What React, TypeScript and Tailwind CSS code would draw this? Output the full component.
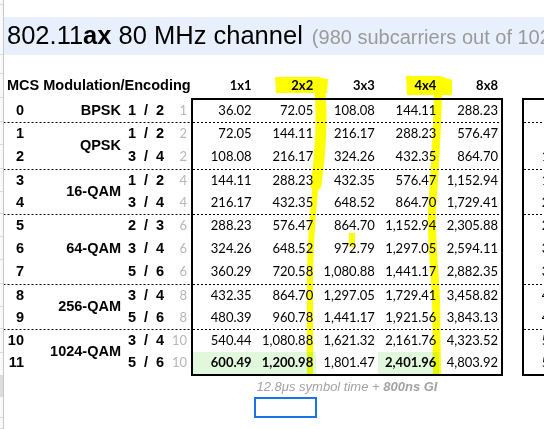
import React from "react";

type Row = {
  mcs: number;
  code: [string, string];
  ss: number;
  vals: string[];
  alt: string;
};

const ROWS: Row[] = [
  { mcs: 0, code: ["1", "2"], ss: 1, vals: ["36.02", "72.05", "108.08", "144.11", "288.23"], alt: "34.03" },
  { mcs: 1, code: ["1", "2"], ss: 2, vals: ["72.05", "144.11", "216.17", "288.23", "576.47"], alt: "68.06" },
  { mcs: 2, code: ["3", "4"], ss: 2, vals: ["108.08", "216.17", "324.26", "432.35", "864.70"], alt: "102.09" },
  { mcs: 3, code: ["1", "2"], ss: 4, vals: ["144.11", "288.23", "432.35", "576.47", "1,152.94"], alt: "136.12" },
  { mcs: 4, code: ["3", "4"], ss: 4, vals: ["216.17", "432.35", "648.52", "864.70", "1,729.41"], alt: "204.18" },
  { mcs: 5, code: ["2", "3"], ss: 6, vals: ["288.23", "576.47", "864.70", "1,152.94", "2,305.88"], alt: "272.24" },
  { mcs: 6, code: ["3", "4"], ss: 6, vals: ["324.26", "648.52", "972.79", "1,297.05", "2,594.11"], alt: "306.27" },
  { mcs: 7, code: ["5", "6"], ss: 6, vals: ["360.29", "720.58", "1,080.88", "1,441.17", "2,882.35"], alt: "340.29" },
  { mcs: 8, code: ["3", "4"], ss: 8, vals: ["432.35", "864.70", "1,297.05", "1,729.41", "3,458.82"], alt: "408.35" },
  { mcs: 9, code: ["5", "6"], ss: 8, vals: ["480.39", "960.78", "1,441.17", "1,921.56", "3,843.13"], alt: "453.71" },
  { mcs: 10, code: ["3", "4"], ss: 10, vals: ["540.44", "1,080.88", "1,621.32", "2,161.76", "4,323.52"], alt: "510.44" },
  { mcs: 11, code: ["5", "6"], ss: 10, vals: ["600.49", "1,200.98", "1,801.47", "2,401.96", "4,803.92"], alt: "567.16" },
];

const GROUPS: { mod: string; rows: number[] }[] = [
  { mod: "BPSK", rows: [0] },
  { mod: "QPSK", rows: [1, 2] },
  { mod: "16-QAM", rows: [3, 4] },
  { mod: "64-QAM", rows: [5, 6, 7] },
  { mod: "256-QAM", rows: [8, 9] },
  { mod: "1024-QAM", rows: [10, 11] },
];

const H = [22, 23, 24, 23, 22, 23, 23, 24, 23, 22, 23, 22];
const HC: Record<number, string> = {
  5: "h-[5px]",
  11: "h-[11px]",
  19: "h-[19px]",
  20: "h-[20px]",
  21: "h-[21px]",
  22: "h-[22px]",
  23: "h-[23px]",
  24: "h-[24px]",
  50: "h-[50px]",
};

const STRIP = [5, 50, 19, 24, 24, 23, 24, 23, 22, 23, 23, 24, 23, 22, 24, 23, 21, 21, 11];

const DASH =
  "bg-[linear-gradient(to_right,#000_2px,transparent_2px)] bg-[length:4px_1px] bg-repeat-x bg-top";

const GREEN = new Set(["11-0", "11-1", "11-3"]);

const ARIAL = "font-['Liberation_Sans',Arial,sans-serif]";
const CAL = "font-['Lato','Liberation_Sans',sans-serif]";

function LeftGroup({ g, first }: { g: { mod: string; rows: number[] }; first: boolean }) {
  return (
    <div className={`flex ${first ? "" : DASH}`}>
      <div className="w-[23px] flex flex-col">
        {g.rows.map((i) => (
          <div key={i} className={`${HC[H[i]]} flex items-center justify-end pr-[3px]`}>
            {ROWS[i].mcs}
          </div>
        ))}
      </div>
      <div className="w-[97px] flex items-center justify-end pr-[3px]">{g.mod}</div>
      <div className="w-[46px] flex flex-col">
        {g.rows.map((i) => (
          <div key={i} className={`${HC[H[i]]} flex items-center`}>
            <span className="w-[16px] text-center">{ROWS[i].code[0]}</span>
            <span className="w-[12px] text-center">/</span>
            <span className="w-[16px] text-center">{ROWS[i].code[1]}</span>
          </div>
        ))}
      </div>
      <div className={`w-[21px] flex flex-col ${CAL} font-normal text-[13px] text-[#b7b7b7]`}>
        {g.rows.map((i) => (
          <div key={i} className={`${HC[H[i]]} flex items-center justify-end pr-[4px]`}>
            {ROWS[i].ss}
          </div>
        ))}
      </div>
    </div>
  );
}

function BoxGroup({ g, first, alt }: { g: { mod: string; rows: number[] }; first: boolean; alt?: boolean }) {
  return (
    <div className={first ? "" : DASH}>
      {g.rows.map((i) => (
        <div key={i} className={`grid grid-cols-5 ${HC[H[i]]}`}>
          {alt ? (
            <>
              <div className="flex items-center justify-end pr-[3px]">{ROWS[i].alt}</div>
              <div />
              <div />
              <div />
              <div />
            </>
          ) : (
            ROWS[i].vals.map((v, c) => (
              <div
                key={c}
                className={`flex items-center justify-end pr-[3px] ${
                  GREEN.has(`${i}-${c}`) ? "bg-[#e2f8dd] font-bold" : ""
                }`}
              >
                {v}
              </div>
            ))
          )}
        </div>
      ))}
    </div>
  );
}

export default function App() {
  return (
    <div className="relative w-[544px] h-[429px] overflow-hidden bg-white flex text-black">
      {/* row header strip */}
      <div className="w-[4px] shrink-0 border-r border-[#c8c8c8] bg-[#f8f9fa] flex flex-col">
        {STRIP.map((h, k) => (
          <div
            key={k}
            className={`${HC[h]} border-b border-[#dadada] ${k === 16 ? "bg-[#dcdcdc]" : ""}`}
          />
        ))}
      </div>

      <div className="flex-1 min-w-0 flex flex-col whitespace-nowrap">
        {/* title band */}
        <div className={`mt-[17px] h-[38px] bg-[#e8f0fe] flex items-center pl-[3px] overflow-hidden ${ARIAL}`}>
          <span className="flex items-baseline leading-none">
            <span className="text-[25.5px]">
              802.11<b>ax</b> 80 MHz channel
            </span>
            <span className="ml-[9px] text-[20px] text-[#9a9a9a]">(980 subcarriers out of 1024)</span>
          </span>
        </div>

        {/* header row */}
        <div className="mt-[19px] h-[24px] flex items-center">
          <div className={`w-[189px] shrink-0 pl-[3px] text-[14.5px] font-bold ${ARIAL}`}>
            MCS Modulation/Encoding
          </div>
          <div className={`w-[308px] shrink-0 grid grid-cols-5 text-[13px] font-bold ${CAL}`}>
            {["1x1", "2x2", "3x3", "4x4", "8x8"].map((t) => (
              <div key={t} className="text-right pr-[3px]">
                {t}
              </div>
            ))}
          </div>
        </div>

        {/* table */}
        <div className="flex">
          <div className={`w-[187px] shrink-0 py-[2px] text-[14.5px] font-bold ${ARIAL}`}>
            {GROUPS.map((g, k) => (
              <LeftGroup key={k} g={g} first={k === 0} />
            ))}
          </div>
          <div className={`w-[312px] shrink-0 border-2 border-black text-[13px] ${CAL}`}>
            {GROUPS.map((g, k) => (
              <BoxGroup key={k} g={g} first={k === 0} />
            ))}
          </div>
          <div className="w-[19px] shrink-0" />
          <div className={`w-[312px] shrink-0 border-2 border-black text-[13px] ${CAL}`}>
            {GROUPS.map((g, k) => (
              <BoxGroup key={k} g={g} first={k === 0} alt />
            ))}
          </div>
        </div>

        {/* footer note */}
        <div className="h-[21px] flex items-center">
          <div className={`ml-[187px] w-[312px] text-center italic text-[13px] text-[#a3a3a3] ${ARIAL}`}>
            12.8μs symbol time + <b>800ns GI</b>
          </div>
        </div>

        {/* selected cell */}
        <div className="h-[21px] flex">
          <div className="ml-[250px] w-[63px] h-[21px] border-2 border-[#1a73e8]" />
        </div>
      </div>

      {/* highlighter strokes */}
      <svg
        className="absolute left-0 top-0 w-[544px] h-[429px] pointer-events-none mix-blend-multiply"
        viewBox="0 0 544 429"
      >
        <polygon points="275,77 318,77 328,79 327,93 276,93" fill="#ffff00" />
        <path
          d="M320 90 C 322 115, 321 150, 316 185"
          stroke="#ffff00"
          strokeWidth="11"
          fill="none"
          strokeLinecap="round"
        />
        <path
          d="M316 180 C 313 210, 310 240, 310 280 L 310 375"
          stroke="#ffff00"
          strokeWidth="6"
          fill="none"
          strokeLinecap="butt"
        />
        <polygon points="406,76 440,76 452,80 452,95 407,95" fill="#ffff00" />
        <path
          d="M438 92 C 437 140, 434 180, 432 210 C 431 240, 435 270, 436 300 L 437 375"
          stroke="#ffff00"
          strokeWidth="8"
          fill="none"
          strokeLinecap="butt"
        />
        <rect x="349" y="233" width="6" height="14" fill="#ffff00" />
      </svg>
    </div>
  );
}
